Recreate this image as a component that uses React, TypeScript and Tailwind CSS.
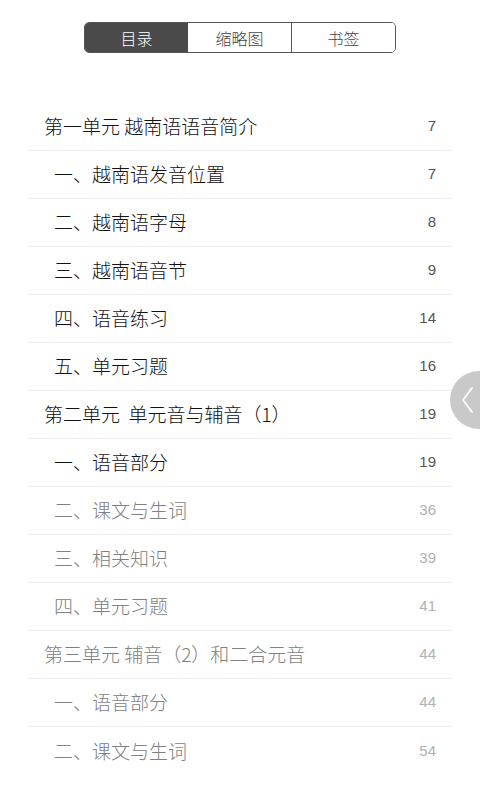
import React from 'react';

type Entry = { title: string; page: number; level: 0 | 1; muted?: boolean };

const ENTRIES: Entry[] = [
  { title: '第一单元 越南语语音简介', page: 7, level: 0 },
  { title: '一、越南语发音位置', page: 7, level: 1 },
  { title: '二、越南语字母', page: 8, level: 1 },
  { title: '三、越南语音节', page: 9, level: 1 },
  { title: '四、语音练习', page: 14, level: 1 },
  { title: '五、单元习题', page: 16, level: 1 },
  { title: '第二单元  单元音与辅音（1）', page: 19, level: 0 },
  { title: '一、语音部分', page: 19, level: 1 },
  { title: '二、课文与生词', page: 36, level: 1, muted: true },
  { title: '三、相关知识', page: 39, level: 1, muted: true },
  { title: '四、单元习题', page: 41, level: 1, muted: true },
  { title: '第三单元 辅音（2）和二合元音', page: 44, level: 0, muted: true },
  { title: '一、语音部分', page: 44, level: 1, muted: true },
  { title: '二、课文与生词', page: 54, level: 1, muted: true },
];

const TABS = ['目录', '缩略图', '书签'];

export default function App() {
  return (
    <div
      className="relative w-[480px] h-[800px] overflow-hidden bg-white"
      style={{ fontFamily: '"Noto Sans CJK SC", "Noto Sans", sans-serif' }}
    >
      <div className="flex justify-center pt-[22px]">
        <div className="flex w-[312px] h-[31px] rounded-[5px] border border-[#555] overflow-hidden">
          {TABS.map((t, i) => (
            <div
              key={t}
              className={`flex-1 flex items-center justify-center text-[16px] font-light ${
                i === 0 ? 'bg-[#4a4a4a] text-white' : 'bg-white text-[#444]'
              } ${i === 2 ? 'border-l border-[#555]' : ''}`}
            >
              {t}
            </div>
          ))}
        </div>
      </div>

      <div className="mt-[50px] mx-[28px]">
        {ENTRIES.map((e, i) => (
          <div
            key={i}
            className={`flex items-center justify-between h-[48px] pr-[16px] ${
              e.level === 0 ? 'pl-[16px]' : 'pl-[26px]'
            } ${i < ENTRIES.length - 1 ? 'border-b border-[#eeeeee]' : ''}`}
          >
            <span
              className={`whitespace-pre text-[19px] font-light ${
                e.muted ? 'text-[#808080]' : 'text-[#111]'
              }`}
            >
              {e.title}
            </span>
            <span
              className={`text-[15px] ${e.muted ? 'text-[#b0b0b0]' : 'text-[#555]'}`}
              style={{ fontFamily: '"Liberation Sans", sans-serif' }}
            >
              {e.page}
            </span>
          </div>
        ))}
      </div>

      <div className="absolute left-[450px] top-[371px] w-[58px] h-[58px] rounded-full bg-[#c9c9c9] flex items-center pl-[10px]">
        <svg width="14" height="28" viewBox="0 0 14 28" fill="none">
          <path d="M12 2 L3 14 L12 26" stroke="white" strokeWidth="1.6" strokeLinecap="round" strokeLinejoin="round" />
        </svg>
      </div>
    </div>
  );
}
